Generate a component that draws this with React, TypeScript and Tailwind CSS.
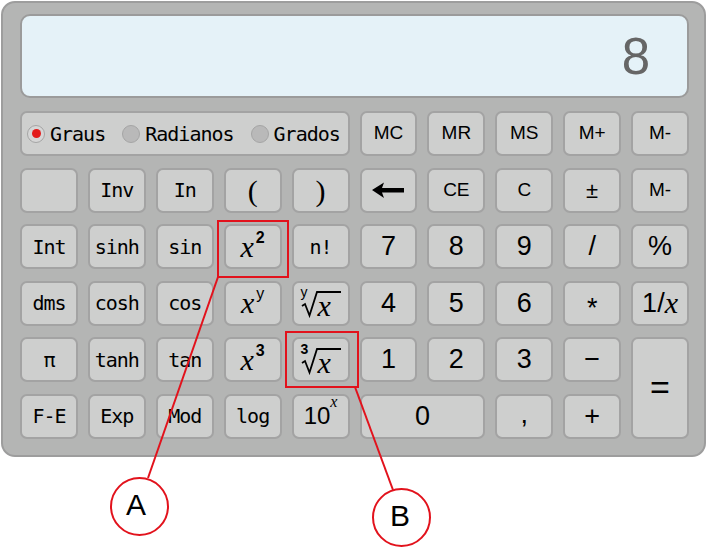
import type { ReactNode } from "react";

const mono = "font-['DejaVu_Sans_Mono',monospace] text-[20px] tracking-[-1px]";
const sans = "font-['Liberation_Sans',Arial,sans-serif]";
const serif = "font-['Liberation_Serif','Times_New_Roman',serif]";

function Key({ children, className = "" }: { children?: ReactNode; className?: string }) {
  return (
    <div
      className={`flex items-center justify-center rounded-[7px] border-2 border-[#a3a3a3] bg-[#cecfce] text-black ${className}`}
    >
      {children}
    </div>
  );
}

function Radio({ label, checked }: { label: string; checked?: boolean }) {
  return (
    <div className="flex items-center gap-[5px]">
      <span
        className={`flex h-[18px] w-[18px] items-center justify-center rounded-full border border-[#a5a5a5] ${
          checked ? "bg-[#d6d6d6]" : "bg-[#b9b9b9]"
        }`}
      >
        {checked && <span className="h-[9px] w-[9px] rounded-full bg-[#e31b1b]" />}
      </span>
      <span className={mono}>{label}</span>
    </div>
  );
}

function X({ size = "text-[30px]" }: { size?: string }) {
  return <span className={`${serif} ${size} italic leading-none`}>x</span>;
}

function Power({ exp, bold }: { exp: string; bold?: boolean }) {
  return (
    <span className="flex items-start">
      <X />
      <span
        className={`${sans} ml-[2px] mt-[-2px] leading-none ${bold ? "text-[16px] font-bold" : "text-[16px]"}`}
      >
        {exp}
      </span>
    </span>
  );
}

function Root({ index, bold }: { index: string; bold?: boolean }) {
  return (
    <span className="relative block h-[30px] w-[42px]">
      <svg className="absolute inset-0" width="42" height="30" viewBox="0 0 42 30">
        <path d="M2 18 L5 16 L9.5 27.5 L17 4 L41 4" fill="none" stroke="#000" strokeWidth="1.8" />
      </svg>
      <span
        className={`${sans} absolute left-[1px] top-[-3px] leading-none ${bold ? "text-[14px] font-bold" : "text-[14px]"}`}
      >
        {index}
      </span>
      <span className={`${serif} absolute left-[18px] top-[3px] text-[30px] italic leading-none`}>x</span>
    </span>
  );
}

function Arrow() {
  return (
    <svg width="32" height="16" viewBox="0 0 32 16">
      <path d="M0 8 L12 0.5 L10 6 L32 6 L32 10.5 L10 10.5 L12 16 Z" fill="#000" />
    </svg>
  );
}

export default function App() {
  const num = `${sans} text-[27px]`;
  const mem = `${sans} text-[19px]`;

  return (
    <div className="relative h-[547px] w-[707px] overflow-hidden bg-white">
      <div className="ml-px mt-px w-[705px] rounded-[14px] border-2 border-[#9d9d9d] bg-[#b4b5b4] pb-[16px] pl-[17px] pr-[15px] pt-[11px]">
        {/* display */}
        <div className="flex h-[84px] items-center justify-end rounded-[10px] border-2 border-[#9b9b9b] bg-[#e5f2f8] pr-[37px]">
          <span className={`${sans} text-[51px] leading-none text-[#666]`}>8</span>
        </div>

        <div className="mt-[13px] grid grid-cols-10 auto-rows-[45px] gap-x-[10px] gap-y-[11.5px]">
          {/* row 1 */}
          <div className="col-span-5 flex items-center gap-[17px] rounded-[7px] border-2 border-[#a3a3a3] bg-[#cecfce] pl-[5px] text-black">
            <Radio label="Graus" checked />
            <Radio label="Radianos" />
            <Radio label="Grados" />
          </div>
          <Key className={mem}>MC</Key>
          <Key className={mem}>MR</Key>
          <Key className={mem}>MS</Key>
          <Key className={mem}>M+</Key>
          <Key className={mem}>M-</Key>

          {/* row 2 */}
          <Key />
          <Key className={mono}>Inv</Key>
          <Key className={mono}>In</Key>
          <Key className={`${serif} text-[30px]`}>(</Key>
          <Key className={`${serif} text-[30px]`}>)</Key>
          <Key>
            <Arrow />
          </Key>
          <Key className={mem}>CE</Key>
          <Key className={mem}>C</Key>
          <Key className={`${sans} text-[22px]`}>±</Key>
          <Key className={mem}>M-</Key>

          {/* row 3 */}
          <Key className={mono}>Int</Key>
          <Key className={mono}>sinh</Key>
          <Key className={mono}>sin</Key>
          <Key>
            <Power exp="2" bold />
          </Key>
          <Key className={mono}>n!</Key>
          <Key className={num}>7</Key>
          <Key className={num}>8</Key>
          <Key className={num}>9</Key>
          <Key className={num}>/</Key>
          <Key className={num}>%</Key>

          {/* row 4 */}
          <Key className={mono}>dms</Key>
          <Key className={mono}>cosh</Key>
          <Key className={mono}>cos</Key>
          <Key>
            <Power exp="y" />
          </Key>
          <Key>
            <Root index="y" />
          </Key>
          <Key className={num}>4</Key>
          <Key className={num}>5</Key>
          <Key className={num}>6</Key>
          <Key className={`${num} pt-[10px]`}>*</Key>
          <Key className={num}>
            1/<X size="text-[30px]" />
          </Key>

          {/* row 5 */}
          <Key className={mono}>π</Key>
          <Key className={mono}>tanh</Key>
          <Key className={mono}>tan</Key>
          <Key>
            <Power exp="3" bold />
          </Key>
          <Key>
            <Root index="3" bold />
          </Key>
          <Key className={num}>1</Key>
          <Key className={num}>2</Key>
          <Key className={num}>3</Key>
          <Key className={num}>−</Key>
          <Key className={`${sans} row-span-2 text-[34px]`}>=</Key>

          {/* row 6 */}
          <Key className={mono}>F-E</Key>
          <Key className={mono}>Exp</Key>
          <Key className={mono}>Mod</Key>
          <Key className={mono}>log</Key>
          <Key className={`${sans} text-[24px]`}>
            <span className="flex items-start">
              10
              <span className={`${serif} mt-[-4px] text-[16px] italic leading-none`}>x</span>
            </span>
          </Key>
          <Key className={`${num} col-span-2`}>0</Key>
          <Key className={`${num} pb-[4px]`}>,</Key>
          <Key className={num}>+</Key>
        </div>
      </div>

      {/* annotations */}
      <svg className="pointer-events-none absolute inset-0" width="707" height="547" viewBox="0 0 707 547">
        <g fill="none" stroke="#e2121c" strokeWidth="2">
          <rect x="218" y="221" width="70" height="56" />
          <rect x="286" y="332" width="72" height="55" />
          <line x1="218" y1="277" x2="148" y2="478" />
          <line x1="355" y1="387" x2="393" y2="490" />
          <circle cx="139.5" cy="506.5" r="28.5" fill="#fff" />
          <circle cx="401.5" cy="517.5" r="28.5" fill="#fff" />
        </g>
      </svg>
      <span className={`${sans} absolute left-[126px] top-[490px] text-[30px] leading-none`}>A</span>
      <span className={`${sans} absolute left-[390px] top-[501px] text-[30px] leading-none`}>B</span>
    </div>
  );
}
